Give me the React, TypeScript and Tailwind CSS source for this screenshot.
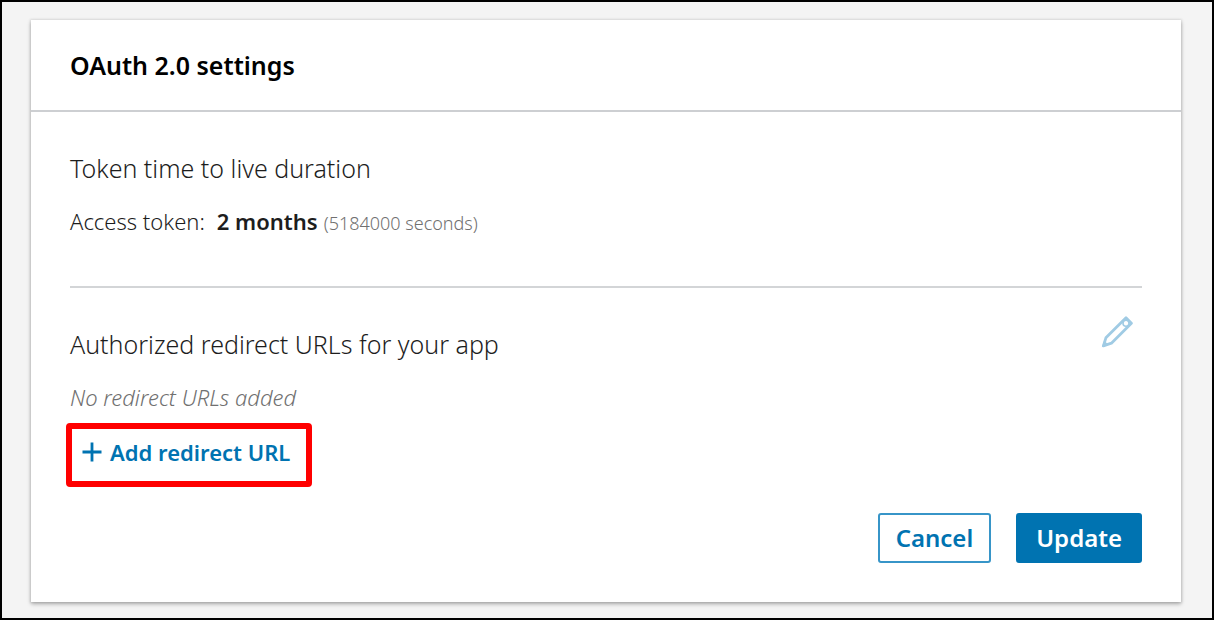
import React from 'react';

const PencilIcon = () => (
    <svg width="32" height="32" viewBox="0 0 32 32" fill="none" stroke="#a0cbe4" strokeWidth="2.8" strokeLinejoin="round" aria-hidden="true">
        <path d="M25 1.8 L30.4 7.2 L10.4 27.2 L2.4 29.8 L4.9 21.8 Z" />
        <circle cx="25" cy="7.2" r="3" strokeWidth="1.6" />
        <path d="M0.8 31.2 L3.2 24.6 L7.4 28.8 Z" fill="#a0cbe4" stroke="none" />
    </svg>
)

const PlusIcon = () => (
    <svg width="20" height="20" viewBox="0 0 20 20" fill="none" stroke="#0073b1" strokeWidth="2.8" aria-hidden="true">
        <path d="M10 0.5V19.5M0.5 10H19.5" />
    </svg>
)

const App = () =>
{
    return(
        <main className="min-h-screen border-2 border-black bg-[#f4f4f4] pt-[18px] pb-3 pl-[29px] pr-[31px] font-['Noto_Sans','Open_Sans',sans-serif] text-[#1d1d1d]">
            <div className="bg-white shadow-[0_0_2px_1px_rgba(0,0,0,0.08),0_2px_4px_rgba(0,0,0,0.3)]">
                <div className="border-b-2 border-[#cdcfd2] px-[39px] py-7">
                    <h1 className="text-[25px] leading-[34px] font-semibold text-black">OAuth 2.0 settings</h1>
                </div>

                <div className="px-[39px] pb-[39px]">
                    <section className="border-b-2 border-[#d3d5d7] pt-10 pb-[51px]">
                        <h2 className="text-[25px] leading-8 font-light">Token time to live duration</h2>
                        <p className="mt-[23px] flex h-7 items-baseline text-[22px] leading-7 font-light">
                            <span>Access token:</span>
                            <strong className="ml-3 font-semibold">2 months</strong>
                            <span className="ml-[6px] text-lg leading-7 text-[#707070]">(5184000 seconds)</span>
                        </p>
                    </section>

                    <section className="pt-7">
                        <div className="flex items-start justify-between">
                            <h2 className="pt-3 text-[25px] leading-8 font-light">Authorized redirect URLs for your app</h2>
                            <button type="button" aria-label="Edit redirect URLs" className="mr-[9px]">
                                <PencilIcon/>
                            </button>
                        </div>
                        <p className="mt-[23px] text-[22px] leading-7 font-light text-[#707070] italic">No redirect URLs added</p>
                        <button type="button" className="mt-3 -ml-1 flex h-16 items-center gap-2 rounded-sm border-[6px] border-[#ff0000] pr-4 pb-[6px] pl-[10px] text-[22px] leading-7 font-semibold text-[#0073b1]">
                            <PlusIcon/>
                            Add redirect URL
                        </button>
                    </section>

                    <div className="mt-[26px] flex justify-end gap-[25px]">
                        <button type="button" className="h-[50px] rounded-[3px] border-2 border-[#3795c8] px-4 text-2xl leading-8 font-semibold text-[#0073b1]">Cancel</button>
                        <button type="button" className="h-[50px] rounded-[3px] bg-[#0073b1] px-5 text-2xl leading-8 font-semibold text-white">Update</button>
                    </div>
                </div>
            </div>
        </main>
    )
}

export default App;
